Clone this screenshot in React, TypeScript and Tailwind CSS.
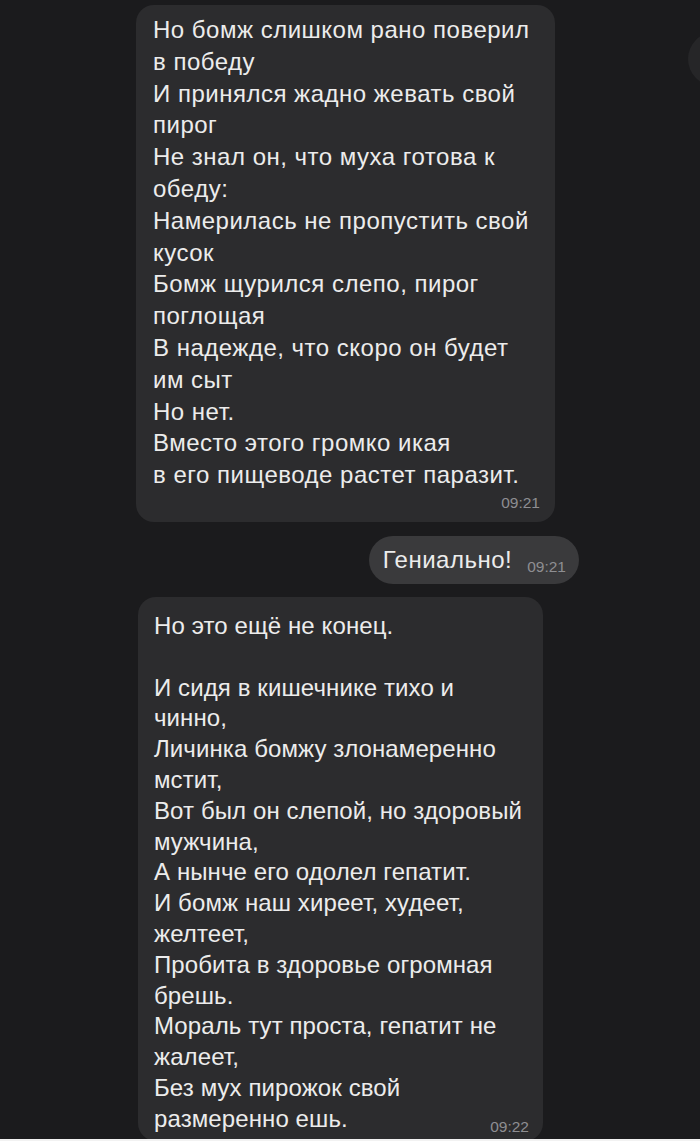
import React from "react";

const first = [
  "Но бомж слишком рано поверил",
  "в победу",
  "И принялся жадно жевать свой",
  "пирог",
  "Не знал он, что муха готова к",
  "обеду:",
  "Намерилась не пропустить свой",
  "кусок",
  "Бомж щурился слепо, пирог",
  "поглощая",
  "В надежде, что скоро он будет",
  "им сыт",
  "Но нет.",
  "Вместо этого громко икая",
  "в его пищеводе растет паразит.",
];

const second = [
  "Но это ещё не конец.",
  "",
  "И сидя в кишечнике тихо и",
  "чинно,",
  "Личинка бомжу злонамеренно",
  "мстит,",
  "Вот был он слепой, но здоровый",
  "мужчина,",
  "А нынче его одолел гепатит.",
  "И бомж наш хиреет, худеет,",
  "желтеет,",
  "Пробита в здоровье огромная",
  "брешь.",
  "Мораль тут проста, гепатит не",
  "жалеет,",
  "Без мух пирожок свой",
];

const font = { fontFamily: "'Liberation Sans', Arial, sans-serif" };

export default function App() {
  return (
    <div
      className="relative h-[1141px] w-[700px] overflow-hidden bg-[#1b1b1d] text-[#ececec]"
      style={font}
    >
      {/* half-hidden round button on the right edge */}
      <div className="absolute left-[688px] top-[32px] h-[54px] w-[54px] rounded-full bg-[#262628]" />

      <div className="flex flex-col pt-[5px]">
        <div className="ml-[136px] w-[419px] rounded-[18px] bg-[#2c2c2e] pl-[17px] pr-[15px] pt-[9px] pb-[7px]">
          <div className="whitespace-nowrap text-[24px] leading-[31.8px] tracking-[0.5px]">
            {first.map((l, i) => (
              <div key={i}>{l}</div>
            ))}
          </div>
          <div className="flex justify-end text-[15.5px] leading-[24px] text-[#8e8e92]">
            09:21
          </div>
        </div>

        <div className="mt-[14px] mr-[121px] flex h-[48px] items-center self-end rounded-full bg-[#3a3a3c] pl-[14px] pr-[13px]">
          <span className="text-[24px] tracking-[0.5px]">Гениально!</span>
          <span className="ml-[15px] mt-[14px] text-[15.5px] text-[#8e8e92]">09:21</span>
        </div>

        <div className="ml-[138px] mt-[13px] w-[405px] rounded-[18px] bg-[#2c2c2e] pl-[16px] pr-[14px] pt-[14px] pb-[6px]">
          <div className="whitespace-nowrap text-[24px] leading-[30.8px] tracking-[0.1px]">
            {second.map((l, i) => (
              <div key={i} className="h-[30.8px]">
                {l}
              </div>
            ))}
            <div className="flex items-end justify-between">
              <span>размеренно ешь.</span>
              <span className="mb-[-2px] text-[15.5px] leading-[20px] tracking-normal text-[#8e8e92]">09:22</span>
            </div>
          </div>
        </div>
      </div>

      <div className="absolute bottom-0 left-0 h-[2px] w-full bg-[#f2f2f2]" />
    </div>
  );
}
